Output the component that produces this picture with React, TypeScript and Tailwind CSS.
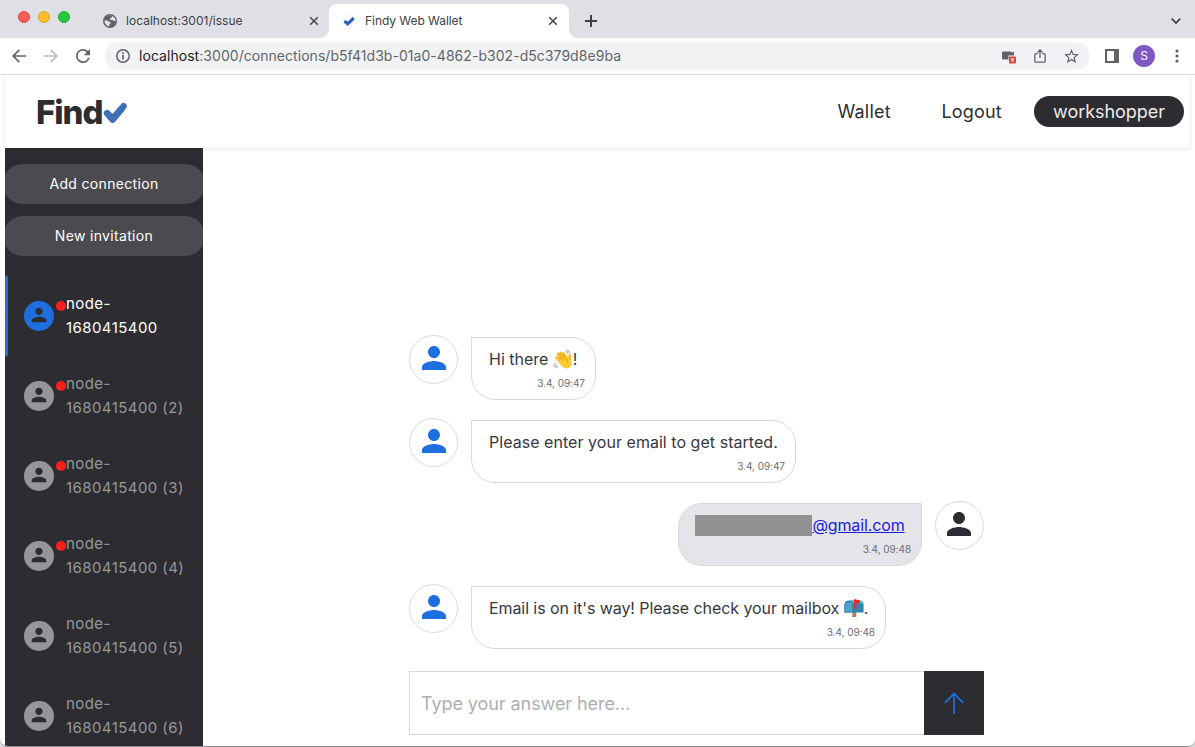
import type { ReactNode } from 'react';

const PERSON =
  'M12 12c2.21 0 4-1.79 4-4s-1.79-4-4-4-4 1.79-4 4 1.79 4 4 4zm0 2c-2.67 0-8 1.34-8 4v2h16v-2c0-2.66-5.33-4-8-4z';

function Person({ className }: { className: string }) {
  return (
    <svg viewBox="0 0 24 24" className={className} fill="currentColor">
      <path d={PERSON} />
    </svg>
  );
}

function Close() {
  return (
    <svg viewBox="0 0 10 10" className="size-[10px] shrink-0" fill="none" stroke="#45494d" strokeWidth="1.6">
      <path d="M1.2 1.2l7.6 7.6M8.8 1.2L1.2 8.8" />
    </svg>
  );
}

function TabStrip() {
  return (
    <div className="flex h-[38px] shrink-0 bg-[#dee0e6]">
      <div className="flex w-[103px] gap-2 pt-[11px] pl-[18px]">
        <span className="size-3 rounded-full border border-[#e0443e] bg-[#ff5f57]" />
        <span className="size-3 rounded-full border border-[#dea123] bg-[#febc2e]" />
        <span className="size-3 rounded-full border border-[#1aab29] bg-[#28c840]" />
      </div>
      <div className="flex h-[41px] w-[216px] items-center">
        <svg viewBox="0 0 14 14" className="size-[14px] shrink-0">
          <circle cx="7" cy="7" r="7" fill="#5f6368" />
          <path
            d="M1.4 6.4l3.3.1 1.6 1.4 1.2.2.2 1.3-1.3.8-.1 2.2C3.800 12 1.500 10 1.400 6.400zM6.100 1.900l2.900.1-.3 1.500-1.700.9-.1 1.300 2.500.2 1.200 1.200 2-.1c0-1.900-.8-3.300-2-4.200-1.200-1-2.900-1.400-4.500-.9z"
            fill="#dee0e6"
          />
        </svg>
        <span className="ml-[9px] flex-1 text-[12px] tracking-[0.020px] text-[#3c4043]">localhost:3001/issue</span>
        <Close />
      </div>
      <div className="flex w-[10px] items-end bg-white">
        <span className="h-full w-full rounded-br-[9px] bg-[#dee0e6]" />
      </div>
      <div className="flex w-[240px] bg-[#dee0e6] pt-1">
        <div className="flex w-full items-center rounded-t-[8px] bg-white pr-[11px] pb-[1px] pl-[12px]">
          <span className="flex size-4 items-center justify-center rounded-full border border-[#f3f4f6]">
            <svg viewBox="0 0 12 12" className="size-3 shrink-0" fill="none" stroke="#2d63b5" strokeWidth="3.200">
              <path d="M1.500 6l3.200 2.800L10.800 3" />
            </svg>
          </span>
          <span className="ml-2 flex-1 text-[12px] tracking-[-0.050px] text-[#3c4043]">Findy Web Wallet</span>
          <Close />
        </div>
      </div>
      <div className="w-[10px] bg-white">
        <div className="h-full w-full rounded-bl-[9px] bg-[#dee0e6]" />
      </div>
      <svg viewBox="0 0 12 12" className="mt-[15px] ml-[6px] size-3" stroke="#3c4043" strokeWidth="2">
        <path d="M6 0v12M0 6h12" />
      </svg>
      <svg viewBox="0 0 10 6" className="mt-[18px] mr-[14px] ml-auto h-[6px] w-[10px]" fill="none" stroke="#45494d" strokeWidth="1.800">
        <path d="M.7.700L5 5 9.300.700" />
      </svg>
    </div>
  );
}

function Toolbar() {
  return (
    <div className="flex h-[37px] shrink-0 items-center border-b border-[#d9dbdd] bg-white pl-3">
      <svg viewBox="0 0 14 14" className="size-[14px]" fill="none" stroke="#5f6368" strokeWidth="1.700">
        <path d="M14 7H1.500M7.300.800L1.200 7l6.100 6.200" />
      </svg>
      <svg viewBox="0 0 14 14" className="ml-[18px] size-[14px]" fill="none" stroke="#babcbe" strokeWidth="1.700">
        <path d="M0 7h12.500M6.700.800L12.800 7l-6.100 6.200" />
      </svg>
      <svg viewBox="4 4 16 16" className="ml-[18px] size-[14px]" fill="#5f6368">
        <path d="M17.650 6.350A7.958 7.958 0 0 0 12 4a8 8 0 1 0 7.730 10h-2.080A6 6 0 1 1 12 6c1.660 0 3.140.69 4.220 1.780L13 11h7V4l-2.350 2.350z" />
      </svg>
      <div className="ml-[15px] flex h-7 w-[985px] items-center rounded-full bg-[#f1f2f4] pl-[11px]">
        <svg viewBox="0 0 14 14" className="size-[14px]" fill="none" stroke="#5f6368" strokeWidth="1.500">
          <circle cx="7" cy="7" r="6.200" />
          <path d="M7 6v4.500M7 3.300v1.600" strokeWidth="1.700" />
        </svg>
        <span className="mb-[2px] ml-[9px] text-[14px] tracking-[0.045px] whitespace-nowrap text-[#62666a]">
          <span className="text-[#202124]">localhost</span>:3000/connections/b5f41d3b-01a0-4862-b302-d5c379d8e9ba
        </span>
        <svg viewBox="0 0 14 13" className="mt-[2px] mr-[18px] ml-auto h-[13px] w-[14px]">
          <path d="M1.200.500h7.600l1.200 1L12 .500v4H6.500v4H1.200A1.200 1.200 0 0 1 0 7.300V1.700A1.200 1.200 0 0 1 1.200.500z" fill="#5f6368" />
          <rect x="7" y="5.500" width="7" height="7" rx=".8" fill="#db4437" />
          <path d="M9 7.500l3 3M12 7.500l-3 3" stroke="#fff" strokeWidth="1.200" />
        </svg>
        <svg viewBox="0 0 12 14" className="mr-[18px] h-[14px] w-3" fill="none" stroke="#5f6368" strokeWidth="1.300">
          <path d="M3.700 4.700H1.800a1 1 0 0 0-1 1v6.500a1 1 0 0 0 1 1h8.400a1 1 0 0 0 1-1V5.700a1 1 0 0 0-1-1H8.300M6 9V1.200M3.500 3.500L6 1l2.500 2.500" />
        </svg>
        <svg viewBox="2 2 20 19" className="mr-[11px] h-[14px] w-[15px]" fill="#5f6368">
          <path d="M22 9.240l-7.190-.62L12 2 9.190 8.630 2 9.240l5.460 4.730L5.820 21 12 17.270 18.180 21l-1.630-7.030L22 9.240zM12 15.400l-3.760 2.270 1-4.280-3.320-2.880 4.380-.38L12 6.100l1.710 4.040 4.380.38-3.320 2.880 1 4.280L12 15.400z" />
        </svg>
      </div>
      <svg viewBox="0 0 14 14" className="ml-[15px] size-[14px]">
        <path d="M0 0h14v14H0zM2 2v10h7V2z" fill="#5f6368" fillRule="evenodd" />
      </svg>
      <span className="ml-[14px] flex size-[22px] items-center justify-center rounded-full bg-[#7e57c2] text-[12px] text-white">S</span>
      <svg viewBox="0 0 4 14" className="ml-[19.500px] h-[14px] w-1" fill="#5f6368">
        <circle cx="2" cy="2" r="1.600" />
        <circle cx="2" cy="7" r="1.600" />
        <circle cx="2" cy="12" r="1.600" />
      </svg>
    </div>
  );
}

function Header() {
  return (
    <header className="relative z-10 mr-[5px] flex h-[73px] shrink-0 items-center bg-white pr-[6px] pl-[31px] text-[18px] text-[#2d2c31] shadow-[0_1px_4px_rgba(0,0,0,0.12)]">
      <span className="w-[67px] text-[33px] leading-[38px] font-extrabold tracking-[-1.050px]">Find</span>
      <svg viewBox="0 0 24 22" className="mt-[3px] h-[22px] w-6" fill="none" stroke="#3f6fb7" strokeWidth="6.500" strokeLinecap="round" strokeLinejoin="round">
        <path d="M4 11.200l5.600 6.400L20.600 4.200" />
        <path d="M5 12l4.600 4.500L18 7.500" />
      </svg>
      <nav className="ml-auto flex items-center">
        <a className="w-[104px] tracking-[0.200px]">Wallet</a>
        <a className="w-[92.500px] tracking-[0.180px]">Logout</a>
        <span className="flex h-[31px] w-[150px] items-center justify-center rounded-full bg-[#2d2c31] tracking-[-0.050px] text-[#ececee]">
          workshopper
        </span>
      </nav>
    </header>
  );
}

const connections = [
  { suffix: '', unread: true, active: true },
  { suffix: ' (2)', unread: true, active: false },
  { suffix: ' (3)', unread: true, active: false },
  { suffix: ' (4)', unread: true, active: false },
  { suffix: ' (5)', unread: false, active: false },
  { suffix: ' (6)', unread: false, active: false },
];

function Sidebar() {
  return (
    <aside className="w-[198px] shrink-0 overflow-hidden bg-[#2d2c31] pt-4">
      <div className="-mx-[2px] flex flex-col gap-3 text-[14px] tracking-[0.330px] text-white">
        <button className="h-10 rounded-[20px] bg-[#4b4a4f] pb-[2px]">Add connection</button>
        <button className="h-10 rounded-[20px] bg-[#4b4a4f] pb-[2px]">New invitation</button>
      </div>
      <ul className="mt-5">
        {connections.map((c) => (
          <li
            key={c.suffix}
            className={`flex h-20 items-center border-l-[3px] pl-4 ${
              c.active ? 'border-[#1d6fe0] text-white' : 'border-transparent text-[#98979b]'
            }`}
          >
            <span
              className={`flex size-[30px] items-center justify-center rounded-full pb-[2px] ${
                c.active ? 'bg-[#1d6fe0]' : 'bg-[#969598]'
              }`}
            >
              <Person className="size-[22px] text-[#2d2c31]" />
            </span>
            <span className={`mt-[-20px] ml-[2px] size-[10px] rounded-full ${c.unread ? 'bg-[#ff1f1f]' : ''}`} />
            <span className="text-[15px] leading-6 tracking-[0.430px] whitespace-nowrap">
              node-
              <br />
              1680415400{c.suffix}
            </span>
          </li>
        ))}
      </ul>
    </aside>
  );
}

function Wave() {
  return (
    <svg viewBox="0 0 20 20" className="mr-[-1px] inline-block size-[21px] align-[-5px]">
      <g fill="none" stroke="#f9b928" strokeWidth="2.700" strokeLinecap="round">
        <path d="M10.500 12L4.800 4.600M12 10.500L7.400 3.700M13.500 9.500l-3.300-5M9 13.500L3.500 8M15.700 10.500l.4-4.200" />
      </g>
      <path d="M5.500 11.500L13 6.500c3.500 1 5.700 5.500 4.300 9.500-1.900 3-5.800 3.200-8 1L4.200 12z" fill="#fcc934" />
      <path d="M6 7l4 4.500M8.500 5.500l3.700 4.800M14 9.200c-1 2-.5 3 .3 4" fill="none" stroke="#dc8f18" strokeWidth=".6" />
      <path d="M11.800 1.800c1.500.3 2.200 1.200 2.500 2.600M13.200.900c1.700.5 2.600 1.600 2.700 3.200M2 13.500c.2 1.700 1 2.700 2.700 3.200M.700 14.500c.3 1.900 1.300 3.100 3.100 3.600" fill="none" stroke="#85878c" strokeWidth=".8" />
    </svg>
  );
}

function Mailbox() {
  return (
    <svg viewBox="0 0 20 20" className="inline-block size-5 align-[-4px]">
      <path d="M8.300 14h4v5h-4z" fill="#ae8052" />
      <path d="M5 2.500h10c3 0 4.600 2 4.600 4.800v7.200H.500V7.300C.5 4.500 2 2.500 5 2.500z" fill="#3186b2" />
      <path d="M5 2.500h10c2 0 3.500 1 4.200 2.700H8.800C8 3.500 6.800 2.700 5 2.500z" fill="#65b5d7" />
      <path d="M.5 14.500V7.300a4.300 4.300 0 0 1 8.600 0v7.200z" fill="#287aa5" />
      <path d="M1.300 13.700V7.500a3.400 3.400 0 0 1 7 0v6.200z" fill="#4ba4cc" />
      <path d="M10 11V1.300h2l1 .8h2.700v3.100H12.300V11z" fill="#f3251c" />
    </svg>
  );
}

function Avatar({ own = false }: { own?: boolean }) {
  return (
    <span className="mt-[-1.600px] flex size-[49px] shrink-0 items-center justify-center rounded-full border border-[#dadadc] bg-white pb-[4px]">
      <Person className={own ? 'size-9 shrink-0 text-[#2d2c31]' : 'size-9 shrink-0 text-[#1d6fe0]'} />
    </span>
  );
}

function Message({ children, time, width, own = false }: { children: ReactNode; time: string; width: string; own?: boolean }) {
  return (
    <div className={`flex h-[63px] ${own ? 'flex-row-reverse gap-[12.600px] pr-[0.400px]' : 'gap-[12.600px] pl-[0.400px]'}`}>
      <Avatar own={own} />
      <div
        className={`flex flex-col rounded-[24px] border border-[#d9d9db] pt-2 pr-[10px] pl-[17px] whitespace-nowrap ${width} ${
          own ? 'rounded-tr-none bg-[#e4e4e9]' : 'rounded-tl-none bg-white'
        }`}
      >
        <div className="h-[26px] text-[16px] leading-[26px] text-[#38373f]">{children}</div>
        <div className="mt-[3px] text-right text-[10px] leading-4 tracking-[-0.050px] text-[#6d6d73]">{time}</div>
      </div>
    </div>
  );
}

function Chat() {
  return (
    <main className="flex flex-1 flex-col bg-white pt-[189px] pl-[206px]">
      <div className="flex w-[575px] flex-col gap-5">
        <Message time="3.4, 09:47" width="w-[125px]">
          Hi there <Wave />!
        </Message>
        <Message time="3.4, 09:47" width="w-[325px]">
          <span className="tracking-[0.040px]">Please enter your email to get started.</span>
        </Message>
        <Message time="3.4, 09:48" width="w-[244px]" own>
          <span className="flex items-center text-[#1b1be0]">
            <span className="ml-[-0.600px] h-[21px] w-[117px] shrink-0 bg-[#919191]" />
            <a className="tracking-[-0.120px] underline">@gmail.com</a>
          </span>
        </Message>
        <Message time="3.4, 09:48" width="w-[415px]">
          <span className="tracking-[-0.080px]">
            Email is on it's way! Please check your mailbox <Mailbox />.
          </span>
        </Message>
      </div>
      <div className="mt-[22px] flex h-16 w-[575px]">
        <input
          className="min-w-0 flex-1 border border-r-0 border-[#d9d9db] px-[11px] text-[18px] tracking-[-0.070px] outline-none placeholder:text-[#afafb1]"
          placeholder="Type your answer here..."
        />
        <button className="flex w-[60px] items-center justify-center bg-[#2d2c31]">
          <svg viewBox="0 0 20 22" className="mb-[1px] h-[22px] w-5" fill="none" stroke="#1d6fe0" strokeWidth="1.800">
            <path d="M10 1.500V22M.800 10.800L10 1.600l9.200 9.200" />
          </svg>
        </button>
      </div>
    </main>
  );
}

export default function App() {
  return (
    <div className="h-[747px] w-[1195px] overflow-hidden bg-[#d7d8da] font-['Inter','Liberation_Sans',sans-serif]">
      <div className="flex h-[747px] flex-col overflow-hidden rounded-b-[8px] border-b border-[#8f8f91] bg-white">
        <TabStrip />
        <Toolbar />
        <div className="flex min-h-0 flex-1 flex-col overflow-hidden pl-[5px]">
          <Header />
          <div className="flex min-h-0 flex-1">
            <Sidebar />
            <Chat />
          </div>
        </div>
      </div>
    </div>
  );
}
